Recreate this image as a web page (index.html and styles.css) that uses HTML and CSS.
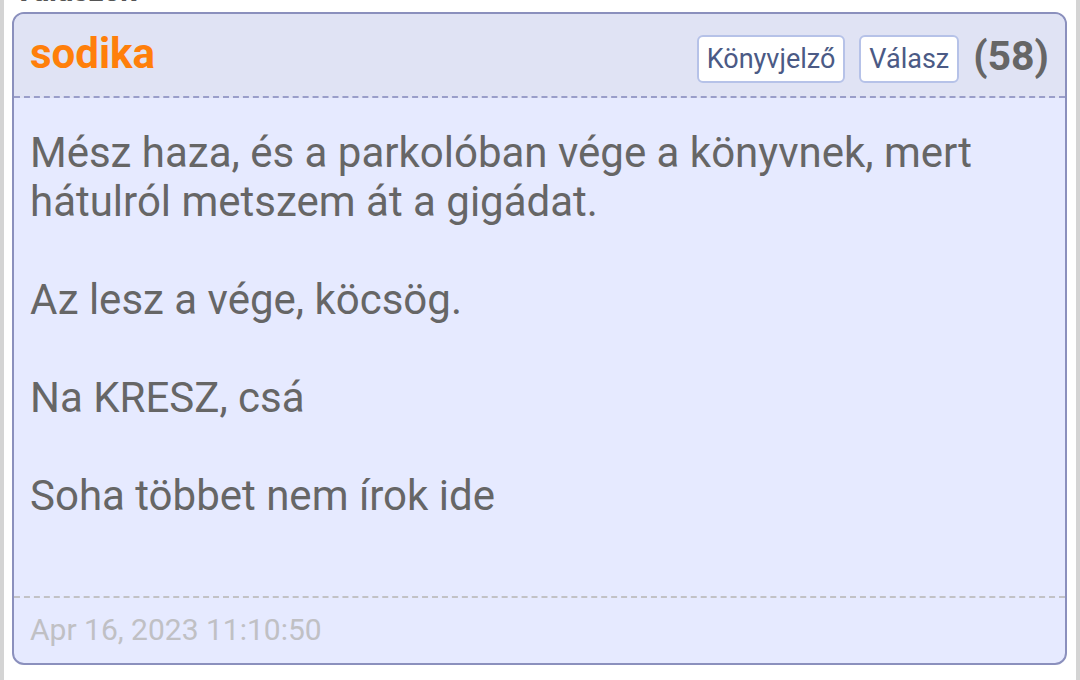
FILE: index.html
```html
<!DOCTYPE html>
<html lang="hu">
<head>
  <meta charset="UTF-8">
  <meta name="viewport" content="width=device-width, initial-scale=1.0">
  <title>sodika - hozzászólás</title>
  <link rel="stylesheet" href="styles.css">
</head>
<body>
  <div class="oldal">
    <div class="cim">Válaszok</div>

    <div class="hozzaszolas">
      <div class="fejlec">
        <span class="nev">sodika</span>
        <div class="gombok">
          <a href="#" class="gomb">Könyvjelző</a>
          <a href="#" class="gomb">Válasz</a>
          <span class="sorszam">(58)</span>
        </div>
      </div>

      <div class="szoveg">
        <p>Mész haza, és a parkolóban vége a könyvnek, mert hátulról metszem át a gigádat.</p>
        <p>Az lesz a vége, köcsög.</p>
        <p>Na KRESZ, csá</p>
        <p>Soha többet nem írok ide</p>
      </div>

      <div class="datum">Apr 16, 2023 11:10:50</div>
    </div>
  </div>
</body>
</html>
```

FILE: styles.css
```css
body {
  font-family: Roboto, "Noto Sans", Arial, sans-serif;
  background-color: #d4d4d4;
  margin: 0;
  padding: 0 4px;
  height: 680px;
  overflow: hidden;
}
.oldal {
  background-color: #ffffff;
  height: 680px;
  padding: 0 8px;
  overflow: hidden;
}
.cim {
  font-size: 30px;
  font-weight: bold;
  color: #555555;
  line-height: 24px;
  margin-top: -21px;
  margin-left: 2px;
  height: 24px;
  margin-bottom: 9px;
}
.hozzaszolas {
  border: 2px solid #8b90bd;
  border-radius: 12px;
  background-color: #e6eaff;
  overflow: hidden;
  width: 1051px;
}
.fejlec {
  background-color: #e0e3f4;
  border-bottom: 2px dashed #9a9ec9;
  height: 82px;
  display: flex;
  align-items: center;
  justify-content: space-between;
  padding: 0 16px 0 16px;
}
.nev {
  color: #ff7f0a;
  font-weight: bold;
  font-size: 42px;
  margin-bottom: 3px;
}
.gombok {
  display: flex;
  align-items: center;
  gap: 14px;
  margin-top: 8px;
}
.gomb {
  display: inline-block;
  background-color: #ffffff;
  border: 2px solid #b6c2e8;
  border-radius: 6px;
  color: #4b5a85;
  text-decoration: none;
  font-size: 27px;
  padding: 6px 8px;
  line-height: 32px;
}
.sorszam {
  font-size: 41px;
  font-weight: bold;
  color: #666666;
  margin-left: 0;
  margin-top: -6px;
}
.szoveg {
  box-sizing: border-box;
  padding: 30px 16px 0 16px;
  height: 500px;
  border-bottom: 2px dashed #c2c2c6;
  color: #666666;
  font-size: 42px;
  line-height: 49px;
}
.szoveg p {
  margin: 0 0 49px 0;
}
.datum {
  box-sizing: border-box;
  color: #c0c0c4;
  font-size: 30px;
  padding: 14px 16px 0 16px;
  height: 65px;
}
```
